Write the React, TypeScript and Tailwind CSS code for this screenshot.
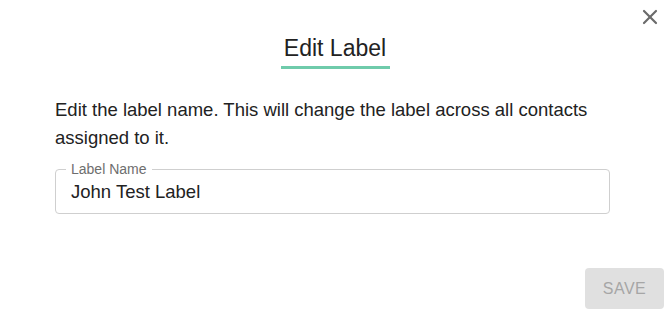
import { X } from "lucide-react"

export default function App() {
  return (
    <div className="relative h-[314px] w-[670px] overflow-hidden bg-white font-['Liberation_Sans',Arial,sans-serif] text-[#212121]">
      {/* Close */}
      <button className="absolute right-[8px] top-[5px] text-[#6b6b6b]">
        <X size={24} strokeWidth={2.2} />
      </button>

      {/* Title */}
      <div className="flex justify-center pt-[34px]">
        <div className="flex flex-col items-center">
          <h2 className="px-[4px] text-[23px] leading-[28px] text-[#222]">Edit Label</h2>
          <div className="mt-[4px] h-[3px] w-[109px] bg-[#6fcbab]" />
        </div>
      </div>

      {/* Body */}
      <div className="px-[55px] pr-[60px] pt-[27px]">
        <p className="text-[18.5px] leading-[28px] text-[#222]">
          Edit the label name. This will change the label across all contacts assigned to it.
        </p>

        <fieldset className="mt-[10px] h-[52px] w-[555px] rounded-[4px] border border-[#cfcfcf] px-[10px]">
          <legend className="px-[5px] text-[14px] leading-[14px] text-[#6e6e6e]">Label Name</legend>
          <div className="pl-[5px] pt-[5px] text-[18.5px] leading-[22px] text-[#222]">John Test Label</div>
        </fieldset>
      </div>

      {/* Footer */}
      <div className="flex justify-end pr-[6px] pt-[54px]">
        <button className="h-[41px] w-[79px] rounded-[4px] bg-[#e0e0e0] text-[16px] tracking-[0.5px] text-[#a6a6a6]">
          SAVE
        </button>
      </div>
    </div>
  )
}
